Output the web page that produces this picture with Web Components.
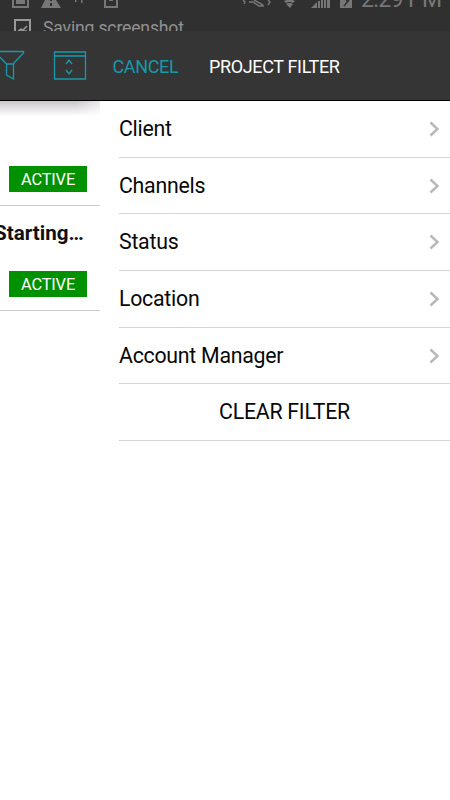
<!DOCTYPE html>
<html lang="en"><head><meta charset="utf-8"><title>Project Filter</title>
<style>html,body{margin:0;background:#fff}body{width:450px;height:800px;overflow:hidden;font-family:Roboto,"Liberation Sans",sans-serif}</style></head>
<body><filter-app></filter-app>
<script>
const define=(name,html)=>customElements.define(name,class extends HTMLElement{
 constructor(){super();const t=document.createElement('template');t.innerHTML=html;this.attachShadow({mode:'open'}).append(t.content.cloneNode(true));}
});
define('status-bar',`<style>
:host{display:block;height:31px;background:#303030;overflow:hidden;color:#777}
.system{display:flex;height:10px}
svg{display:block;flex:none}
.clock{font-size:23px;line-height:24px;margin:-12px 0 0 1px;height:24px;white-space:nowrap;letter-spacing:-.6px}
.notice{display:flex;height:21px;padding:9px 0 0 14px;box-sizing:border-box;gap:11px}
.notice span{font-size:17.6px;letter-spacing:-.17px;line-height:20px;color:#929292;white-space:nowrap;margin-top:-1px}
</style><div class="system"><svg width="360" height="10" viewBox="0 0 360 10" fill="#777">
<path d="M12 0h2v6h13V0h2v8H12zM16 0h9v4h-9zM104 0h2v6h10V0h2v8h-14zM109 0h4v1h-4zM75 0h1.500v2H75zM81 0h1.500v3H81z"/>
<path fill-rule="evenodd" d="M45 0h11l5 8H41zM50 0v1h2V0zm0 3v3h2V3z"/>
<path d="M243 0l2 2-1 2M249 2h4l6 4h5M254 0l9 5M268 0l2 2-2 3" fill="none" stroke="#777" stroke-width="1.500"/>
<path d="M284 1q6-3 11 0l-2 2q-4-2-7 0zM286 4q3-2 7 0l-3 4zM311 8l6-6v6zM318 1h2v7h-2zM321 0h2v8h-2zM324 0h2v8h-2zM327 0h3v8h-3z"/>
<path d="M340 0h12v8h-12z"/><path d="M349 0l-5 6M349 0l-3 1" stroke="#303030" stroke-width="1.500"/></svg><div class="clock">2:29 PM</div></div>
<div class="notice"><svg width="18" height="18" viewBox="0 0 18 18" fill="none" stroke="#989898" stroke-width="2"><path d="M1 18V1h15v17"/><path d="M4 12l3-2 2 1 4-4M5 12h8" stroke-width="1.500"/></svg><span>Saving screenshot</span></div>`);
define('app-toolbar',`<style>
:host{display:flex;height:69px;background:#353535;border-bottom:1px solid #000;color:#fff;align-items:center;font-size:18px;letter-spacing:-.35px;line-height:24px}
svg{flex:none;margin-top:1px}.cancel{color:#1799aa;margin-left:25.500px;width:96.500px;white-space:nowrap}.title{white-space:nowrap}.cancel,.title{margin-top:3px}
</style><svg width="87" height="32" viewBox="0 0 87 32" fill="none" stroke="#1799aa" stroke-width="1.300">
<path d="M-9 1.500H23.500V3L13 14H6.500L-4 3zM6.500 14v11l7 4V14M54.500 2h31v27h-31zM54.500 6H85.500M66 14l3-4 3 4M66 20l3 4 3-4"/></svg>
<span class="cancel">CANCEL</span><span class="title">PROJECT FILTER</span>`);
define('project-card',`<style>
:host{display:flex;box-sizing:border-box;height:105px;border-bottom:1px solid #ccc;flex-direction:column;overflow:hidden}
.name{height:65px;padding-top:15px;box-sizing:border-box;font-size:20.6px;line-height:24px;font-weight:700;color:#111;white-space:nowrap;margin-left:-6px}
.badge{width:78px;height:26px;margin-left:9px;background:#009100;color:#fff;font-size:16.4px;letter-spacing:-.15px;line-height:28px;text-align:center}
</style><div class="name"><slot></slot></div><div class="badge">ACTIVE</div>`);
define('project-list',`<style>:host{display:block;width:100px;overflow:hidden;flex:none;background:linear-gradient(90deg,transparent 75px,#fff9 100px),linear-gradient(#c9c5c9,#fff 15px)}</style><slot></slot>`);
define('filter-row',`<style>
:host{display:flex;box-sizing:border-box;height:56.7px;border-bottom:1px solid #d4d4d4;color:#080808;font-size:21.3px;letter-spacing:-.25px;line-height:28px;align-items:center;justify-content:space-between;padding-right:10px}
:host([action]){justify-content:center;padding:0}
:host([action]) svg{display:none}svg{flex:none}
</style><span><slot></slot></span><svg width="11" height="16" viewBox="0 0 11 16" fill="none" stroke="#b9b9b9" stroke-width="2.500"><path d="M1.500 1.500L8.500 8l-7 6.500"/></svg>`);
define('filter-panel',`<style>:host{display:block;flex:1;margin-left:19px}</style><slot></slot>`);
define('filter-app',`<style>:host{display:block;width:450px;height:800px;background:#fff;overflow:hidden}main{display:flex;height:699px}</style>
<status-bar></status-bar><app-toolbar></app-toolbar><main><project-list><project-card></project-card><project-card>Starting…</project-card></project-list>
<filter-panel><filter-row>Client</filter-row><filter-row>Channels</filter-row><filter-row>Status</filter-row><filter-row>Location</filter-row><filter-row>Account Manager</filter-row><filter-row action>CLEAR FILTER</filter-row></filter-panel></main>`);
</script></body></html>
